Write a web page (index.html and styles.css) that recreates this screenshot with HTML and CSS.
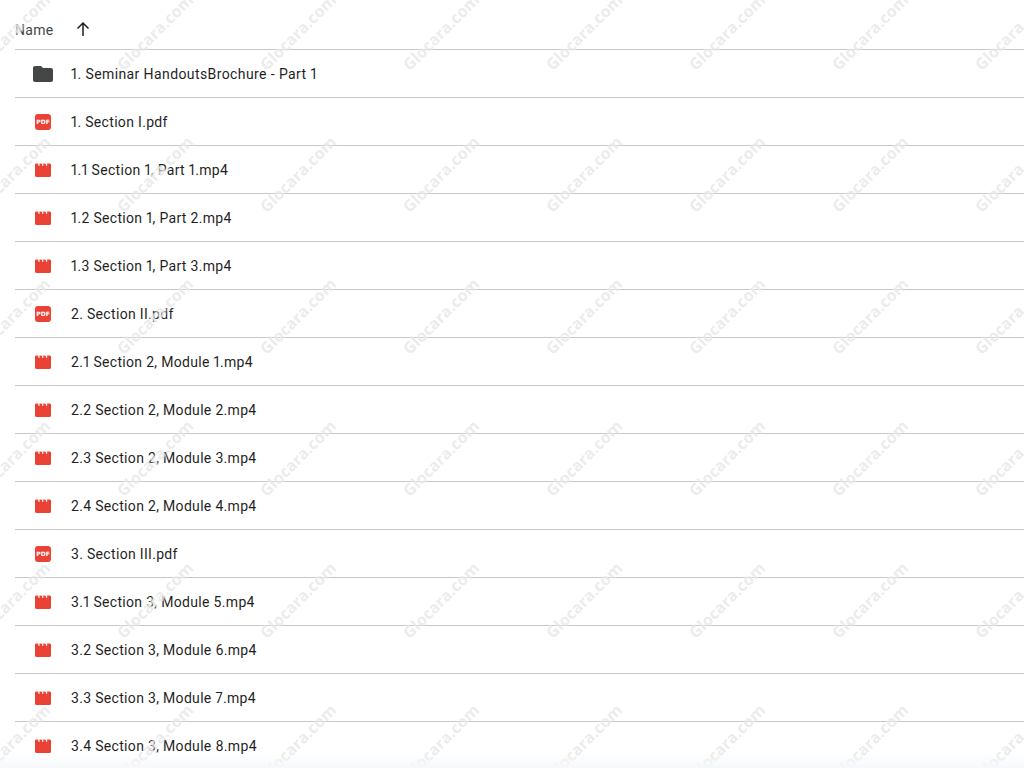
FILE: index.html
```html
<!DOCTYPE html>
<html lang="en">
<head>
    <meta charset="UTF-8">
    <meta name="viewport" content="width=device-width, initial-scale=1.0">
    <title>Files</title>
    <link rel="stylesheet" href="styles.css">
</head>
<body>
    <svg class="icon-defs" aria-hidden="true">
        <symbol id="folder" viewBox="2 4 20 16"><path d="M10 4H4c-1.1 0-2 .9-2 2v12c0 1.1.9 2 2 2h16c1.1 0 2-.9 2-2V8c0-1.1-.9-2-2-2h-8l-2-2z"/></symbol>
        <symbol id="movie" viewBox="0 0 16 14"><path d="M0 3V1.2L1 .4h1.8l1 2.6h.7L4.500 .4h2.100l1 2.600h.7L8.300 .4h2.100l1 2.600h.7L12.100 .4H15l1 .8V12.500c0 .8-.7 1.500-1.500 1.500h-13C.7 14 0 13.300 0 12.500z"/></symbol>
    </svg>

    <div class="page">
        <div class="list-head">
            <span class="head-name">Name</span>
            <svg class="head-arrow" viewBox="0 0 16 16"><path d="M8 15V2M2.500 7.500L8 2l5.500 5.500"/></svg>
        </div>

        <div class="row"><span class="cell-icon"><svg class="ico-folder"><use href="#folder"/></svg></span><span class="file-name folder-name">1. Seminar HandoutsBrochure - Part 1</span></div>
        <div class="row"><span class="cell-icon"><span class="ico-pdf">PDF</span></span><span class="file-name">1. Section I.pdf</span></div>
        <div class="row"><span class="cell-icon"><svg class="ico-movie"><use href="#movie"/></svg></span><span class="file-name">1.1 Section 1, Part 1.mp4</span></div>
        <div class="row"><span class="cell-icon"><svg class="ico-movie"><use href="#movie"/></svg></span><span class="file-name">1.2 Section 1, Part 2.mp4</span></div>
        <div class="row"><span class="cell-icon"><svg class="ico-movie"><use href="#movie"/></svg></span><span class="file-name">1.3 Section 1, Part 3.mp4</span></div>
        <div class="row"><span class="cell-icon"><span class="ico-pdf">PDF</span></span><span class="file-name">2. Section II.pdf</span></div>
        <div class="row"><span class="cell-icon"><svg class="ico-movie"><use href="#movie"/></svg></span><span class="file-name">2.1 Section 2, Module 1.mp4</span></div>
        <div class="row"><span class="cell-icon"><svg class="ico-movie"><use href="#movie"/></svg></span><span class="file-name">2.2 Section 2, Module 2.mp4</span></div>
        <div class="row"><span class="cell-icon"><svg class="ico-movie"><use href="#movie"/></svg></span><span class="file-name">2.3 Section 2, Module 3.mp4</span></div>
        <div class="row"><span class="cell-icon"><svg class="ico-movie"><use href="#movie"/></svg></span><span class="file-name">2.4 Section 2, Module 4.mp4</span></div>
        <div class="row"><span class="cell-icon"><span class="ico-pdf">PDF</span></span><span class="file-name">3. Section III.pdf</span></div>
        <div class="row"><span class="cell-icon"><svg class="ico-movie"><use href="#movie"/></svg></span><span class="file-name">3.1 Section 3, Module 5.mp4</span></div>
        <div class="row"><span class="cell-icon"><svg class="ico-movie"><use href="#movie"/></svg></span><span class="file-name">3.2 Section 3, Module 6.mp4</span></div>
        <div class="row"><span class="cell-icon"><svg class="ico-movie"><use href="#movie"/></svg></span><span class="file-name">3.3 Section 3, Module 7.mp4</span></div>
        <div class="row row-last"><span class="cell-icon"><svg class="ico-movie"><use href="#movie"/></svg></span><span class="file-name">3.4 Section 3, Module 8.mp4</span></div>

        <div class="watermarks">
            <span class="mark">Glocara.com</span><span class="mark">Glocara.com</span><span class="mark">Glocara.com</span><span class="mark">Glocara.com</span>
            <span class="mark">Glocara.com</span><span class="mark">Glocara.com</span><span class="mark">Glocara.com</span><span class="mark">Glocara.com</span>
            <span class="mark">Glocara.com</span><span class="mark">Glocara.com</span><span class="mark">Glocara.com</span><span class="mark">Glocara.com</span>
            <span class="mark">Glocara.com</span><span class="mark">Glocara.com</span><span class="mark">Glocara.com</span><span class="mark">Glocara.com</span>
            <span class="mark">Glocara.com</span><span class="mark">Glocara.com</span><span class="mark">Glocara.com</span><span class="mark">Glocara.com</span>
            <span class="mark">Glocara.com</span><span class="mark">Glocara.com</span><span class="mark">Glocara.com</span><span class="mark">Glocara.com</span>
            <span class="mark">Glocara.com</span><span class="mark">Glocara.com</span><span class="mark">Glocara.com</span><span class="mark">Glocara.com</span>
            <span class="mark">Glocara.com</span><span class="mark">Glocara.com</span><span class="mark">Glocara.com</span><span class="mark">Glocara.com</span>
            <span class="mark">Glocara.com</span><span class="mark">Glocara.com</span><span class="mark">Glocara.com</span><span class="mark">Glocara.com</span>
            <span class="mark">Glocara.com</span><span class="mark">Glocara.com</span><span class="mark">Glocara.com</span><span class="mark">Glocara.com</span>
            <span class="mark">Glocara.com</span><span class="mark">Glocara.com</span><span class="mark">Glocara.com</span><span class="mark">Glocara.com</span>
            <span class="mark">Glocara.com</span><span class="mark">Glocara.com</span><span class="mark">Glocara.com</span><span class="mark">Glocara.com</span>
        </div>
        <div class="bottom-fade"></div>
    </div>
</body>
</html>
```

FILE: styles.css
```css
* {
  box-sizing: border-box;
}

html, body {
  margin: 0;
  height: 100%;
  overflow: hidden;
  background: #fff;
}

.icon-defs {
  display: none;
}

.page {
  position: relative;
  height: 768px;
  overflow: hidden;
  padding-left: 15px;
  font-family: Roboto, "Noto Sans", sans-serif;
  font-size: 14px;
  color: #1f1f1f;
  font-variant-numeric: proportional-nums;
}

/* cabecera */
.list-head {
  display: flex;
  align-items: center;
  height: 50px;
  padding-top: 10px;
  border-bottom: 1px solid #c7c7c7;
}

.head-name {
  width: 60px;
  color: #444746;
  letter-spacing: 0.3px;
}

.head-arrow {
  width: 16px;
  height: 16px;
  margin-top: -2px;
  fill: none;
  stroke: #1f1f1f;
  stroke-width: 1.5;
}

/* filas */
.row {
  display: flex;
  align-items: center;
  height: 48px;
  border-bottom: 1px solid #c7c7c7;
}

.row-last {
  border-bottom: none;
}

.cell-icon {
  display: flex;
  justify-content: center;
  align-items: center;
  width: 56px;
}

.file-name {
  letter-spacing: 0.32px;
}

.folder-name {
  letter-spacing: 0.4px;
}

.ico-folder {
  width: 20px;
  height: 16px;
  fill: #444746;
}

.ico-movie {
  width: 16px;
  height: 14px;
  fill: #ea4335;
}

.ico-pdf {
  display: block;
  width: 16px;
  height: 16px;
  border-radius: 3px;
  background: #ea4335;
  color: #fff;
  font-family: "DejaVu Sans", sans-serif;
  font-size: 6px;
  font-weight: 700;
  line-height: 16px;
  text-align: center;
}

/* marca de agua */
.watermarks {
  position: absolute;
  left: -60px;
  top: -39px;
  display: grid;
  grid-template-columns: repeat(8, 143px);
  grid-auto-rows: 142px;
  pointer-events: none;
}

.mark {
  place-self: center;
  transform: rotate(-45deg);
  font-family: "Open Sans", sans-serif;
  font-size: 16px;
  font-weight: 700;
  white-space: nowrap;
  color: rgba(190, 190, 190, 0.3);
  text-shadow: 0 0 2px #fff;
}

.bottom-fade {
  position: absolute;
  left: 0;
  right: 0;
  bottom: 0;
  height: 14px;
  background: linear-gradient(rgba(246, 248, 250, 0), #f6f8fa);
  pointer-events: none;
}
```
